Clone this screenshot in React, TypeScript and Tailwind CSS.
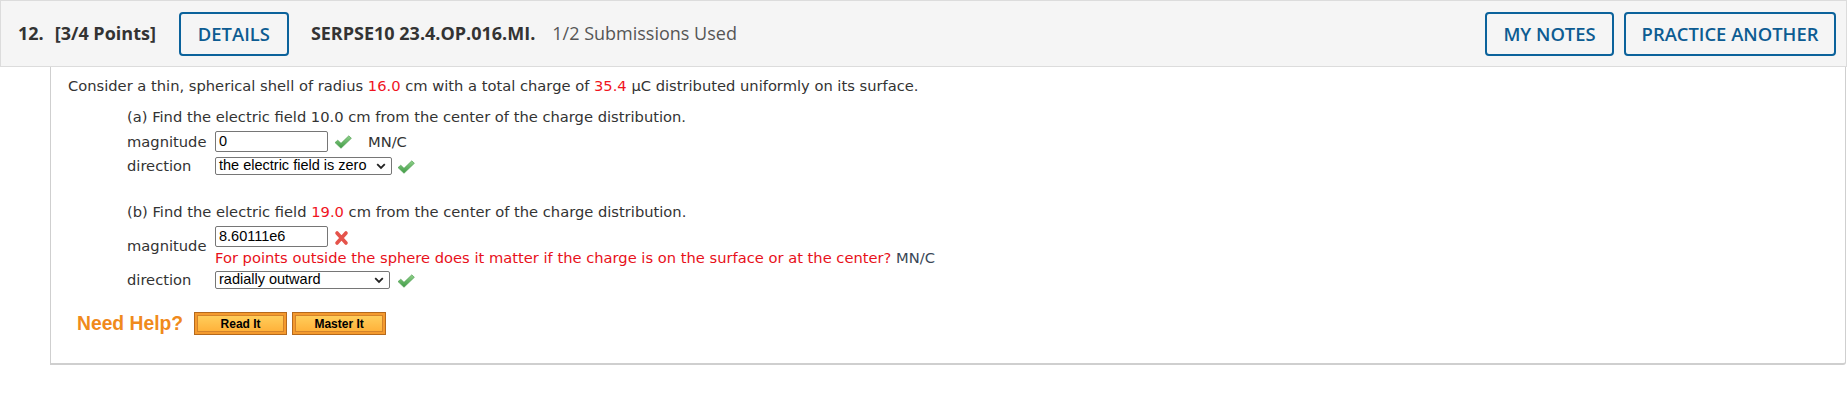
import React from 'react'

function Check() {
  return (
    <svg width="18" height="14" viewBox="0 0 18 14" className="shrink-0">
      <defs>
        <linearGradient id="chk" x1="0" y1="0" x2="0" y2="1">
          <stop offset="0" stopColor="#8fd08a" />
          <stop offset="1" stopColor="#3f9b45" />
        </linearGradient>
      </defs>
      <path d="M1 7.6 L3.8 5.2 L7 8.3 L14.8 0.8 L17.4 3.3 L7 13.3 Z" fill="url(#chk)" stroke="#4a9a4c" strokeWidth="0.6" strokeLinejoin="round" />
    </svg>
  )
}

function Cross() {
  return (
    <svg width="15" height="16" viewBox="0 0 15 16" className="shrink-0">
      <path d="M3 3 L12 13 M12 3 L3 13" stroke="#e5534b" strokeWidth="3.6" strokeLinecap="round" />
    </svg>
  )
}

function Select({ value, width }: { value: string; width: string }) {
  return (
    <div className={`relative h-[18px] ${width} border border-[#767676] rounded-[2px] bg-white flex items-center pl-[3px] font-['Liberation_Sans',Arial,sans-serif] text-[14.5px] text-black leading-none`}>
      <span>{value}</span>
      <svg width="10" height="7" viewBox="0 0 10 7" className="absolute right-[5px] top-[5px]">
        <path d="M1.2 1.2 L5 5 L8.8 1.2" fill="none" stroke="#222" strokeWidth="1.8" />
      </svg>
    </div>
  )
}

function Input({ value }: { value: string }) {
  return (
    <div className="h-[21px] w-[113px] border border-[#767676] rounded-[2px] bg-white flex items-center pl-[3px] font-['Liberation_Sans',Arial,sans-serif] text-[14.5px] text-black leading-none">
      {value}
    </div>
  )
}

function HelpButton({ label, width }: { label: string; width: string }) {
  return (
    <div className={`h-[23px] ${width} border border-[#b5691c] bg-[#f49a2e] p-[2px]`}>
      <div className="h-full border border-[#d4832a] bg-gradient-to-b from-[#ffcd5a] to-[#ffb23a] flex items-center justify-center font-['Liberation_Sans',Arial,sans-serif] font-bold text-[12px] text-black leading-none">
        {label}
      </div>
    </div>
  )
}

export default function App() {
  const red = 'text-[#f0141e]'
  return (
    <div className="w-[1848px] h-[407px] bg-white">
      {/* Header */}
      <header className="w-[1847px] h-[67px] border border-[#dcdcdc] bg-[#f5f5f5] flex items-center pl-[17px] pr-[10px] font-['Open_Sans',sans-serif] text-[#333]">
        <span className="font-bold text-[18px]">12.</span>
        <span className="font-bold text-[18px] ml-[11px]">[3/4 Points]</span>
        <button className="ml-[23px] w-[110px] h-[44px] border-2 border-[#0b629b] rounded-[4px] text-[#0d5c92] font-semibold text-[18.4px] flex items-center justify-center">
          DETAILS
        </button>
        <span className="ml-[22px] font-bold text-[18px]">SERPSE10 23.4.OP.016.MI.</span>
        <span className="ml-[17px] text-[18px] text-[#555]">1/2 Submissions Used</span>
        <div className="ml-auto flex gap-[10px]">
          <button className="w-[129px] h-[44px] border-2 border-[#0b629b] rounded-[4px] text-[#0d5c92] font-semibold text-[18.4px] flex items-center justify-center">
            MY NOTES
          </button>
          <button className="w-[212px] h-[44px] border-2 border-[#0b629b] rounded-[4px] text-[#0d5c92] font-semibold text-[18.4px] flex items-center justify-center">
            PRACTICE ANOTHER
          </button>
        </div>
      </header>

      {/* Question card */}
      <div className="ml-[50px] w-[1796px] h-[298px] border-l border-r border-b-2 border-[#cfcfcf] rounded-br-[3px] pl-[17px] pt-[10px] font-['Verdana','DejaVu_Sans',sans-serif] text-[14.7px] text-[#333] leading-[18px]">
        <p>
          Consider a thin, spherical shell of radius <span className={red}>16.0</span> cm with a total charge of{' '}
          <span className={red}>35.4</span> μC distributed uniformly on its surface.
        </p>

        <div className="ml-[59px]">
          {/* part a */}
          <p className="mt-[13px]">(a) Find the electric field 10.0 cm from the center of the charge distribution.</p>
          <div className="mt-[5px] flex items-center h-[21px]">
            <span className="w-[88px]">magnitude</span>
            <Input value="0" />
            <span className="ml-[6px]"><Check /></span>
            <span className="ml-[16px]">MN/C</span>
          </div>
          <div className="mt-[4px] flex items-center h-[19px]">
            <span className="w-[88px]">direction</span>
            <Select value="the electric field is zero" width="w-[177px]" />
            <span className="ml-[5px] mt-[2px]"><Check /></span>
          </div>

          {/* part b */}
          <p className="mt-[28px]">
            (b) Find the electric field <span className={red}>19.0</span> cm from the center of the charge distribution.
          </p>
          <div className="mt-[5px] flex items-center">
            <span className="w-[88px]">magnitude</span>
            <div className="flex flex-col">
              <div className="flex items-center">
                <Input value="8.60111e6" />
                <span className="ml-[6px] mt-[2px]"><Cross /></span>
              </div>
              <p className="mt-[2px] leading-[17px]">
                <span className="text-[#e8101a]">For points outside the sphere does it matter if the charge is on the surface or at the center?</span>{' '}
                <span className="text-[#3a4756]">MN/C</span>
              </p>
            </div>
          </div>
          <div className="mt-[4px] flex items-center h-[19px]">
            <span className="w-[88px]">direction</span>
            <Select value="radially outward" width="w-[175px]" />
            <span className="ml-[7px] mt-[2px]"><Check /></span>
          </div>
        </div>

        {/* help */}
        <div className="mt-[23px] ml-[9px] flex items-center">
          <span className="font-['Liberation_Sans',Arial,sans-serif] font-bold text-[19.3px] text-[#f08a1c] leading-none">Need Help?</span>
          <div className="ml-[11px] flex gap-[5px]">
            <HelpButton label="Read It" width="w-[93px]" />
            <HelpButton label="Master It" width="w-[94px]" />
          </div>
        </div>
      </div>
    </div>
  )
}
